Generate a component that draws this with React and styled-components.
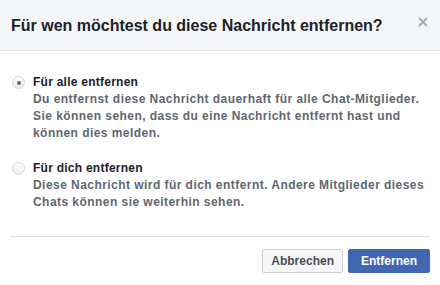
import React from "react";
import styled, { createGlobalStyle } from "styled-components";

const Global = createGlobalStyle`
  html, body { margin: 0; padding: 0; background: #fff; }
  body { font-family: "Liberation Sans", Arial, Helvetica, sans-serif; }
`;

const Dialog = styled.div`
  width: 440px;
  height: 285px;
  background: #fff;
  display: flex;
  flex-direction: column;
`;

const Header = styled.div`
  height: 51px;
  box-sizing: border-box;
  background: #f5f6f7;
  border-bottom: 1px solid #e5e5e5;
  display: flex;
  align-items: center;
  justify-content: space-between;
  padding: 0 10px 0 11px;
  position: relative;
`;

const Title = styled.h2`
  margin: 0;
  font-size: 16px;
  line-height: 20px;
  font-weight: bold;
  color: #1d2129;
  padding-top: 2px;
`;

const Close = styled.button`
  position: absolute;
  right: 10px;
  top: 15px;
  width: 14px;
  height: 14px;
  padding: 0;
  border: 0;
  background: none;
  display: flex;
  align-items: center;
  justify-content: center;
`;

const Body = styled.div`
  padding: 23px 10px 0 12px;
  display: flex;
  flex-direction: column;
  gap: 18px;
`;

const Option = styled.label`
  display: flex;
  align-items: flex-start;
  gap: 8px;
`;

const Radio = styled.span`
  flex: none;
  width: 13px;
  height: 13px;
  margin-top: 2px;
  box-sizing: border-box;
  border-radius: 50%;
  border: 1px solid #d3d6db;
  background: linear-gradient(#fdfdfd, #eceef1);
  display: flex;
  align-items: center;
  justify-content: center;
  &::after {
    content: "";
    width: 4px;
    height: 4px;
    border-radius: 50%;
    background: ${(p) => (p.$checked ? "#606770" : "transparent")};
  }
`;

const OptionText = styled.div`
  display: flex;
  flex-direction: column;
`;

const Label = styled.div`
  font-size: 12px;
  line-height: 16px;
  font-weight: bold;
  letter-spacing: 0.25px;
  color: #1d2129;
  margin-bottom: 1px;
`;

const Desc = styled.div`
  font-size: 12px;
  line-height: 17px;
  font-weight: bold;
  letter-spacing: 0.45px;
  color: #606770;
  white-space: nowrap;
`;

const Footer = styled.div`
  margin: 25px 10px 0 10px;
  border-top: 1px solid #dddfe2;
  padding-top: 12px;
  display: flex;
  justify-content: flex-end;
  gap: 5px;
`;

const Button = styled.button`
  height: 24px;
  box-sizing: border-box;
  padding: 0 ${(p) => (p.$primary ? "12px" : "8px")};
  border-radius: 2px;
  font-family: inherit;
  font-size: 12px;
  font-weight: bold;
  line-height: 22px;
  border: 1px solid ${(p) => (p.$primary ? "#4267b2" : "#ccd0d5")};
  background: ${(p) => (p.$primary ? "#4267b2" : "#f5f6f7")};
  color: ${(p) => (p.$primary ? "#fff" : "#4b4f56")};
`;

export default function App() {
  return (
    <>
      <Global />
      <Dialog>
        <Header>
          <Title>Für wen möchtest du diese Nachricht entfernen?</Title>
          <Close aria-label="Schließen">
            <svg width="10" height="10" viewBox="0 0 10 10">
              <path d="M1 1L9 9M9 1L1 9" stroke="#a8abb0" strokeWidth="1.8" />
            </svg>
          </Close>
        </Header>
        <Body>
          <Option>
            <Radio $checked />
            <OptionText>
              <Label>Für alle entfernen</Label>
              <Desc>
                Du entfernst diese Nachricht dauerhaft für alle Chat-Mitglieder.
                <br />
                Sie können sehen, dass du eine Nachricht entfernt hast und
                <br />
                können dies melden.
              </Desc>
            </OptionText>
          </Option>
          <Option>
            <Radio />
            <OptionText>
              <Label>Für dich entfernen</Label>
              <Desc>
                Diese Nachricht wird für dich entfernt. Andere Mitglieder dieses
                <br />
                Chats können sie weiterhin sehen.
              </Desc>
            </OptionText>
          </Option>
        </Body>
        <Footer>
          <Button>Abbrechen</Button>
          <Button $primary>Entfernen</Button>
        </Footer>
      </Dialog>
    </>
  );
}
